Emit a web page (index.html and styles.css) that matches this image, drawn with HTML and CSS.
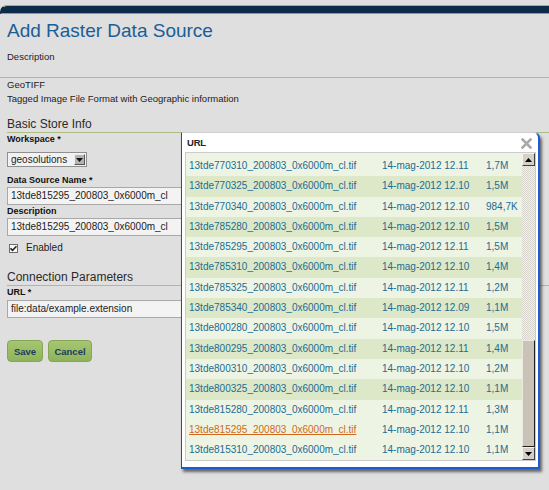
FILE: index.html
```html
<!DOCTYPE html>
<html>
<head>
<meta charset="utf-8">
<link rel="stylesheet" href="styles.css">
</head>
<body>
<div class="topbar"></div>
<div class="page">
  <h1 class="title">Add Raster Data Source</h1>
  <p class="desc">Description</p>
</div>
<div class="rule"></div>
<div class="page">
  <div class="info">
    <div>GeoTIFF</div>
    <div>Tagged Image File Format with Geographic information</div>
  </div>
  <h2 class="section first">Basic Store Info</h2>
  <div class="label">Workspace *</div>
  <div class="select"><span class="select-text">geosolutions</span><span class="select-btn"><svg width="7" height="4" viewBox="0 0 7 4"><path d="M0 0h7L3.5 4z" fill="#111"/></svg></span></div>
  <div class="label l-name">Data Source Name *</div>
  <div class="input">13tde815295_200803_0x6000m_cl</div>
  <div class="label l-desc">Description</div>
  <div class="input">13tde815295_200803_0x6000m_cl</div>
  <div class="check-row">
    <span class="checkbox"><svg width="7" height="7" viewBox="0 0 7 7"><path d="M0.5 3.3 2.6 5.4 6.5 1.2" fill="none" stroke="#222" stroke-width="1.6"/></svg></span>
    <span>Enabled</span>
  </div>
  <h2 class="section second">Connection Parameters</h2>
  <div class="label">URL *</div>
  <div class="input i-url">file:data/example.extension</div>
  <div class="buttons">
    <button class="btn btn-save">Save</button>
    <button class="btn btn-cancel">Cancel</button>
  </div>
</div>

<div class="popup">
  <div class="popup-head">
    <span class="popup-title">URL</span>
    <svg class="close" width="11" height="11" viewBox="0 0 11 11"><path d="M1.5 1.5 9.5 9.5M9.5 1.5 1.5 9.5" stroke="#a9a9a9" stroke-width="2.6" stroke-linecap="square"/></svg>
  </div>
  <div class="listbox">
    <div class="rows">
      <div class="row"><span>13tde770310_200803_0x6000m_cl.tif</span><span>14-mag-2012 12.11</span><span>1,7M</span></div>
      <div class="row alt"><span>13tde770325_200803_0x6000m_cl.tif</span><span>14-mag-2012 12.10</span><span>1,5M</span></div>
      <div class="row"><span>13tde770340_200803_0x6000m_cl.tif</span><span>14-mag-2012 12.10</span><span>984,7K</span></div>
      <div class="row alt"><span>13tde785280_200803_0x6000m_cl.tif</span><span>14-mag-2012 12.10</span><span>1,5M</span></div>
      <div class="row"><span>13tde785295_200803_0x6000m_cl.tif</span><span>14-mag-2012 12.11</span><span>1,5M</span></div>
      <div class="row alt"><span>13tde785310_200803_0x6000m_cl.tif</span><span>14-mag-2012 12.10</span><span>1,4M</span></div>
      <div class="row"><span>13tde785325_200803_0x6000m_cl.tif</span><span>14-mag-2012 12.11</span><span>1,2M</span></div>
      <div class="row alt"><span>13tde785340_200803_0x6000m_cl.tif</span><span>14-mag-2012 12.09</span><span>1,1M</span></div>
      <div class="row"><span>13tde800280_200803_0x6000m_cl.tif</span><span>14-mag-2012 12.10</span><span>1,5M</span></div>
      <div class="row alt"><span>13tde800295_200803_0x6000m_cl.tif</span><span>14-mag-2012 12.11</span><span>1,4M</span></div>
      <div class="row"><span>13tde800310_200803_0x6000m_cl.tif</span><span>14-mag-2012 12.10</span><span>1,2M</span></div>
      <div class="row alt"><span>13tde800325_200803_0x6000m_cl.tif</span><span>14-mag-2012 12.10</span><span>1,1M</span></div>
      <div class="row"><span>13tde815280_200803_0x6000m_cl.tif</span><span>14-mag-2012 12.11</span><span>1,3M</span></div>
      <div class="row hover"><span class="link">13tde815295_200803_0x6000m_cl.tif</span><span>14-mag-2012 12.10</span><span>1,1M</span></div>
      <div class="row"><span>13tde815310_200803_0x6000m_cl.tif</span><span>14-mag-2012 12.10</span><span>1,1M</span></div>
    </div>
    <div class="scrollbar">
      <div class="sb-btn"><svg width="7" height="4" viewBox="0 0 7 4"><path d="M3.5 0 7 4H0z" fill="#000"/></svg></div>
      <div class="sb-track"><div class="sb-thumb"></div></div>
      <div class="sb-btn"><svg width="7" height="4" viewBox="0 0 7 4"><path d="M0 0h7L3.5 4z" fill="#000"/></svg></div>
    </div>
  </div>
</div>
</body>
</html>
```

FILE: styles.css
```css
html, body {
  margin: 0;
  padding: 0;
}
body {
  background: #dfdfdf;
  font-family: "Liberation Sans", Arial, sans-serif;
  font-size: 10px;
  color: #222;
  height: 490px;
  overflow: hidden;
  position: relative;
}
.topbar {
  margin-top: 5px;
  height: 7px;
  border-top: 1px solid #9db85a;
  border-bottom: 1px solid #7e9db4;
  border-left: 2px solid #0c2b4b;
  background: #0c2b4b;
  border-top-left-radius: 7px;
}
.page {
  padding-left: 7px;
}
.title {
  margin: 5px 0 0;
  font-size: 19px;
  line-height: 23px;
  font-weight: normal;
  color: #1b5e95;
}
.desc {
  margin: 9px 0 0;
  font-size: 9.5px;
  line-height: 12px;
  height: 12px;
}
.rule {
  margin-top: 14px;
  height: 1px;
  background: #aabe86;
}
.info {
  font-size: 9.5px;
  line-height: 14px;
}
.section {
  margin: 0;
  font-size: 12px;
  line-height: 15px;
  font-weight: normal;
  color: #2a2a2a;
  border-bottom: 1px solid #aabe86;
}
.section.first {
  margin-top: 11px;
}
.section.second {
  margin-top: 16px;
}
.label {
  font-size: 9px;
  font-weight: bold;
  line-height: 12px;
  color: #111;
}
.l-name {
  margin-top: 7px;
}
.select {
  margin-top: 7px;
  width: 78px;
  height: 13px;
  border: 1px solid #8f8f8f;
  background: #f2f2f2;
  display: flex;
  align-items: center;
  justify-content: space-between;
  font-size: 10px;
}
.select-text {
  padding-left: 3px;
  line-height: 13px;
}
.select-btn {
  width: 11px;
  height: 11px;
  margin-right: 1px;
  background: #b3b3b3;
  border: 1px solid;
  border-color: #eee #555 #555 #eee;
  box-sizing: border-box;
  display: flex;
  align-items: center;
  justify-content: center;
}
.input {
  margin-top: 1px;
  width: 340px;
  height: 16px;
  border: 1px solid #a8a8a8;
  background: #f3f3f3;
  font-size: 10px;
  line-height: 16px;
  padding-left: 3px;
  box-sizing: content-box;
}
.i-url {
  margin-top: 2px;
}
.check-row {
  margin-top: 6px;
  display: flex;
  align-items: center;
  gap: 8px;
  padding-left: 2px;
  font-size: 10px;
  line-height: 12px;
}
.checkbox {
  width: 7px;
  height: 7px;
  border: 1px solid #6b6b6b;
  background: #fafafa;
  display: flex;
  align-items: center;
  justify-content: center;
}
.buttons {
  margin-top: 22px;
  display: flex;
  gap: 5px;
}
.btn {
  height: 22px;
  padding: 0;
  border: 1px solid #86a655;
  border-radius: 4px;
  background: linear-gradient(#a6c672, #8fb35a);
  color: #1c3b5f;
  font-family: "Liberation Sans", Arial, sans-serif;
  font-size: 9.5px;
  font-weight: bold;
}
.btn-save {
  width: 36px;
}
.btn-cancel {
  width: 44px;
}

/* popup */
.popup {
  position: absolute;
  left: 181px;
  top: 132px;
  width: 356px;
  height: 334px;
  background: #fff;
  border-top: 1px solid #cfcfcf;
  border-left: 1px solid #4a4a4a;
  border-right: 2px solid #1a5cd6;
  border-bottom: 2px solid #1a5cd6;
  border-top-right-radius: 6px;
  box-shadow: 2px 3px 3px rgba(0, 0, 0, 0.55);
  display: flex;
  flex-direction: column;
}
.popup-head {
  height: 19px;
  display: flex;
  align-items: center;
  justify-content: space-between;
  padding: 0 6px 0 5px;
}
.popup-title {
  font-size: 9.5px;
  color: #222;
  font-weight: bold;
  letter-spacing: -0.2px;
}
.close {
  display: block;
  margin-top: 2px;
}
.listbox {
  margin: 0 2px 0 3px;
  height: 307px;
  border: 1px solid #cbcbcb;
  display: flex;
}
.rows {
  width: 336px;
  padding-top: 3px;
  background: #edf4e4;
  overflow: hidden;
}
.row {
  height: 20.3px;
  line-height: 20.3px;
  display: grid;
  grid-template-columns: 193px 104px 1fr;
  padding-left: 3px;
  background: #edf4e4;
  color: #1b6c94;
  font-size: 10px;
  white-space: nowrap;
}
.row.alt {
  background: #dce8c8;
}
.row .link {
  color: #d0691a;
  text-decoration: underline;
}
.scrollbar {
  width: 13px;
  display: flex;
  flex-direction: column;
}
.sb-btn {
  height: 13px;
  box-sizing: border-box;
  background: #d4d0c8;
  border: 1px solid;
  border-color: #f4f2ee #404040 #404040 #f4f2ee;
  display: flex;
  align-items: center;
  justify-content: center;
}
.sb-track {
  flex: 1;
  display: flex;
  flex-direction: column;
  justify-content: flex-end;
  background: repeating-conic-gradient(#f1f0eb 0 25%, #d8d5cf 0 50%) 0 0 / 2px 2px;
}
.sb-thumb {
  height: 107px;
  box-sizing: border-box;
  background: #c9c2b7;
  border: 1px solid;
  border-color: #ece9e3 #1e1e1e #1e1e1e #ece9e3;
}
```
